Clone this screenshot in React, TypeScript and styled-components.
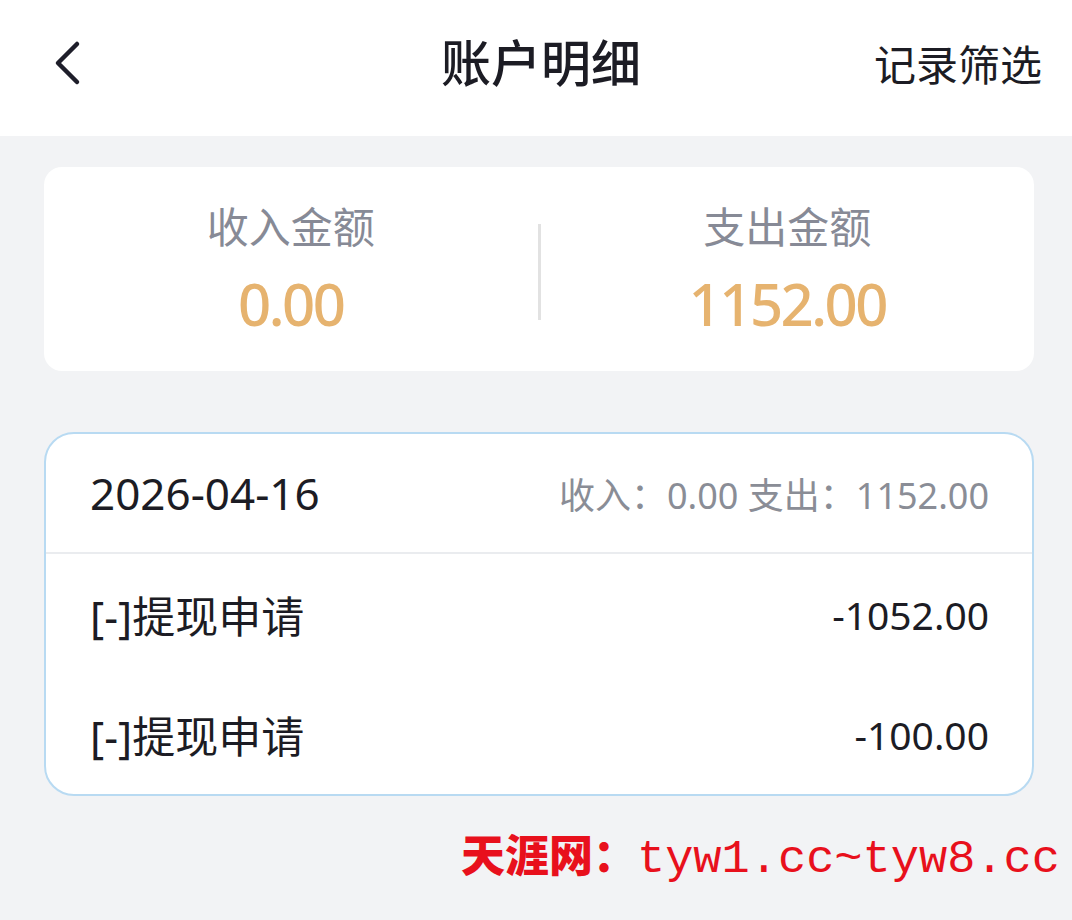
import styled, { createGlobalStyle } from "styled-components";

const GlobalStyle = createGlobalStyle`
  body {
    margin: 0;
    background: #f2f3f5;
    font-family: "Noto Sans", "Noto Sans CJK SC", sans-serif;
  }
`;

const Page = styled.div`
  width: 1072px;
  min-height: 920px;
  background: #f2f3f5;
`;

const NavBar = styled.header`
  height: 136px;
  background: #ffffff;
  display: grid;
  grid-template-columns: 1fr auto 1fr;
  align-items: center;
  padding: 0 30px 0 50px;
  box-sizing: border-box;
`;

const BackButton = styled.button`
  justify-self: start;
  border: none;
  background: none;
  padding: 0;
  width: 40px;
  height: 60px;
  display: flex;
  align-items: center;
  margin-top: -10px;
`;

const Title = styled.h1`
  margin: 0 10px 16px 0;
  font-size: 50px;
  font-weight: 500;
  color: #1c1c24;
`;

const FilterLink = styled.span`
  justify-self: end;
  font-size: 42px;
  color: #1c1c24;
  margin-bottom: 12px;
`;

const Content = styled.main`
  padding: 31px 38px 0 44px;
  display: flex;
  flex-direction: column;
  gap: 61px;
`;

const SummaryCard = styled.section`
  height: 204px;
  background: #ffffff;
  border-radius: 18px;
  display: grid;
  grid-template-columns: 1fr 3px 1fr;
  align-items: center;
`;

const SummaryCol = styled.div`
  display: flex;
  flex-direction: column;
  align-items: center;
  gap: 14px;
`;

const SummaryLabel = styled.span`
  font-size: 42px;
  color: #878a96;
  line-height: 56px;
`;

const SummaryValue = styled.span`
  font-size: 58px;
  font-weight: 500;
  color: #e6b36f;
  line-height: 70px;
  letter-spacing: -2.5px;
`;

const VDivider = styled.div`
  width: 3px;
  height: 96px;
  background: #e2e2e2;
  margin-top: 6px;
`;

const ListCard = styled.section`
  background: #ffffff;
  border: 2px solid #b8daf2;
  border-radius: 30px;
  overflow: hidden;
`;

const DayHeader = styled.div`
  height: 118px;
  display: flex;
  align-items: center;
  justify-content: space-between;
  padding: 0 43px 0 44px;
  border-bottom: 2px solid #eaecef;
`;

const DateText = styled.span`
  font-size: 44px;
  color: #1c1c24;
`;

const DayTotals = styled.span`
  font-size: 36px;
  color: #8a8d96;
`;

const Row = styled.div`
  height: 120px;
  display: flex;
  align-items: center;
  justify-content: space-between;
  padding: 0 43px 0 44px;
`;

const RowName = styled.span`
  font-size: 43px;
  color: #1c1c24;
`;

const RowAmount = styled.span`
  font-size: 39px;
  color: #1c1c24;
`;

const Watermark = styled.div`
  display: flex;
  align-items: baseline;
  justify-content: flex-end;
  padding: 25px 12px 0 0;
  color: #e8101c;
`;

const MarkName = styled.span`
  font-family: "Noto Sans CJK SC", sans-serif;
  font-size: 44px;
  font-weight: 900;
`;

const MarkUrl = styled.span`
  font-family: "Liberation Mono", monospace;
  font-size: 47px;
`;

const BackIcon = () => (
  <svg width="34" height="48" viewBox="0 0 34 48">
    <path
      d="M27 5 L8 24 L27 43"
      fill="none"
      stroke="#1e1e2a"
      strokeWidth="4.5"
      strokeLinecap="round"
      strokeLinejoin="round"
    />
  </svg>
);

const records = [
  { name: "[-]提现申请", amount: "-1052.00" },
  { name: "[-]提现申请", amount: "-100.00" },
];

export default function App() {
  return (
    <Page>
      <GlobalStyle />
      <NavBar>
        <BackButton>
          <BackIcon />
        </BackButton>
        <Title>账户明细</Title>
        <FilterLink>记录筛选</FilterLink>
      </NavBar>
      <Content>
        <SummaryCard>
          <SummaryCol>
            <SummaryLabel>收入金额</SummaryLabel>
            <SummaryValue>0.00</SummaryValue>
          </SummaryCol>
          <VDivider />
          <SummaryCol>
            <SummaryLabel>支出金额</SummaryLabel>
            <SummaryValue>1152.00</SummaryValue>
          </SummaryCol>
        </SummaryCard>
        <ListCard>
          <DayHeader>
            <DateText>2026-04-16</DateText>
            <DayTotals>收入：0.00 支出：1152.00</DayTotals>
          </DayHeader>
          {records.map((r, i) => (
            <Row key={i}>
              <RowName>{r.name}</RowName>
              <RowAmount>{r.amount}</RowAmount>
            </Row>
          ))}
        </ListCard>
      </Content>
      <Watermark>
        <MarkName>天涯网：</MarkName>
        <MarkUrl>tyw1.cc~tyw8.cc</MarkUrl>
      </Watermark>
    </Page>
  );
}
